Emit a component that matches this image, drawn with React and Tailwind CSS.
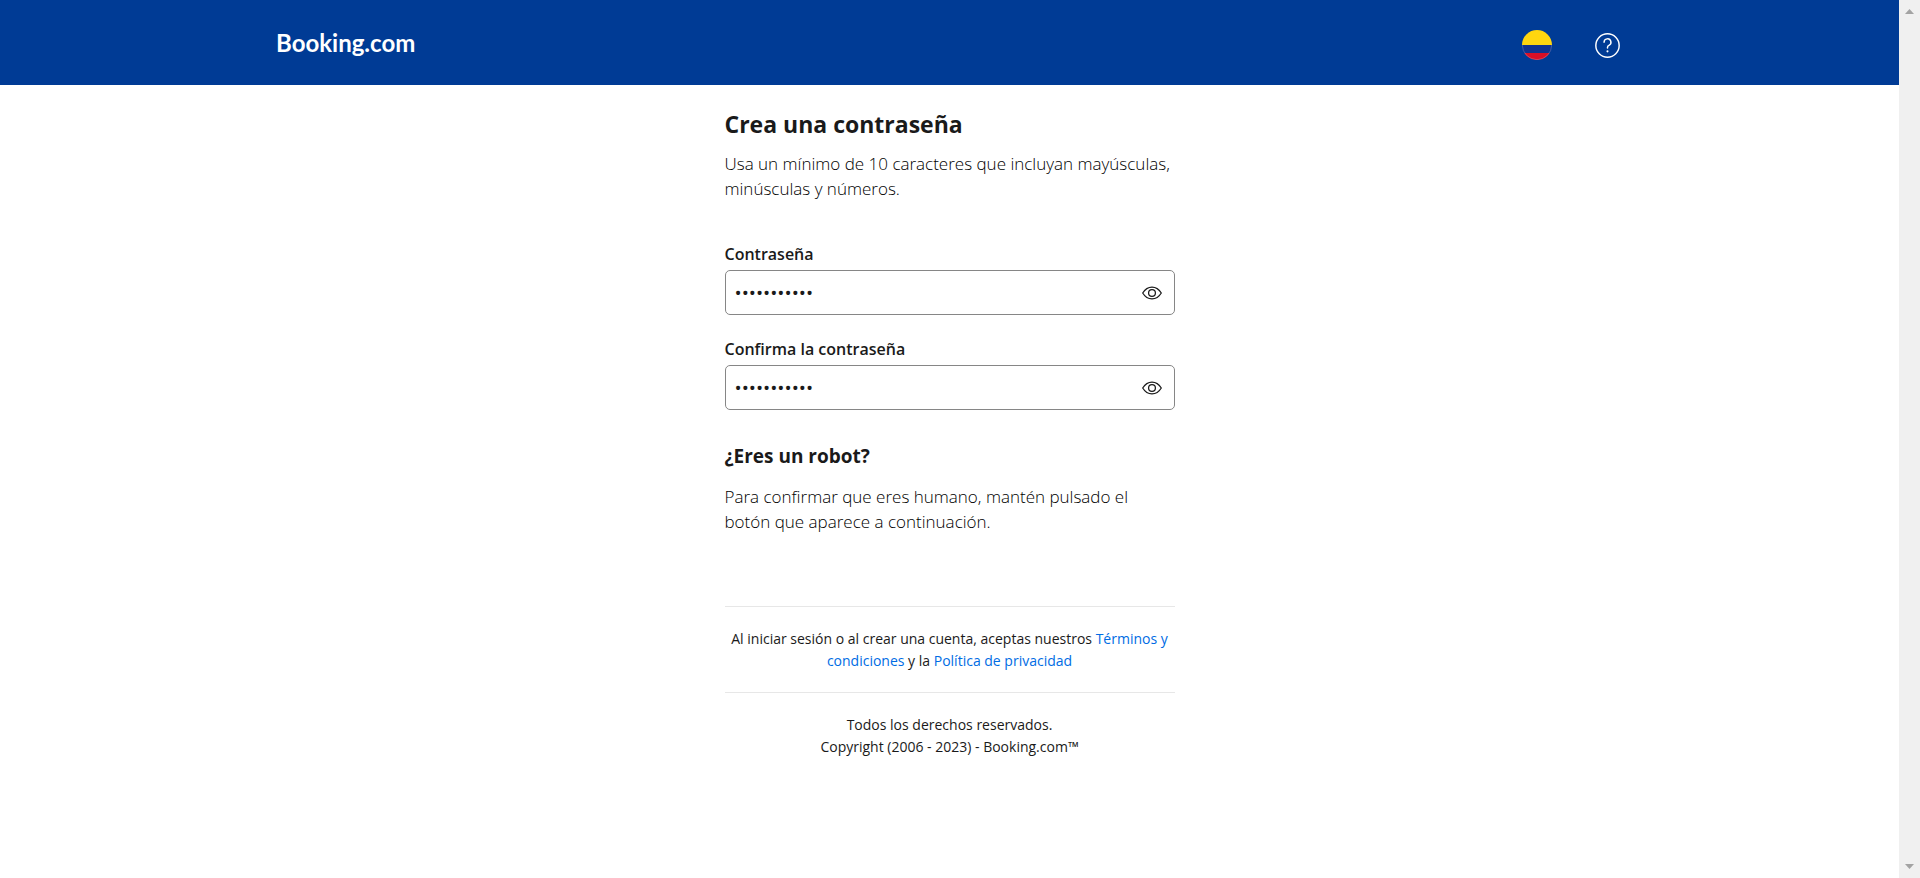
import { useState } from "react";

function EyeIcon() {
  return (
    <svg viewBox="0 0 20 14" className="h-[14px] w-5" fill="none" stroke="currentColor" strokeWidth="1.25" strokeLinejoin="round" aria-hidden="true">
      <path d="M0.7 7C3 3.2 6.2 1.1 10 1.1S17 3.2 19.3 7C17 10.8 13.8 12.9 10 12.9S3 10.8 0.7 7Z" />
      <circle cx="10" cy="7" r="3.4" />
    </svg>
  );
}

function PasswordField({ id, label }) {
  const [visible, setVisible] = useState(false);
  return (
    <div className="flex flex-col gap-[3px]">
      <label htmlFor={id} className="text-[16px] leading-[25px] font-semibold">
        {label}
      </label>
      <div className="flex h-[45px] items-center rounded-[5px] border border-[#868686] pr-3">
        <input
          id={id}
          type={visible ? "text" : "password"}
          defaultValue="Reserva2023"
          className="min-w-0 flex-1 bg-transparent pt-0.5 pl-[9px] text-[19px] outline-none"
        />
        <button type="button" aria-label="Mostrar contraseña" onClick={() => setVisible(!visible)}>
          <EyeIcon />
        </button>
      </div>
    </div>
  );
}

function FlagIcon() {
  return (
    <svg viewBox="0 0 30 30" className="size-[30px]" aria-hidden="true">
      <defs>
        <clipPath id="flag-round">
          <circle cx="15" cy="15" r="15" />
        </clipPath>
      </defs>
      <g clipPath="url(#flag-round)">
        <rect width="30" height="15" fill="#FFD60F" />
        <rect y="15" width="30" height="8" fill="#10338F" />
        <rect y="23" width="30" height="7" fill="#D80F27" />
      </g>
      <path d="M0.3 15A14.7 14.7 0 0 0 29.7 15" fill="none" stroke="#fff" strokeOpacity="0.35" strokeWidth="0.6" />
    </svg>
  );
}

function HelpIcon() {
  return (
    <svg viewBox="0 0 24 24" className="size-[25px]" fill="none" stroke="currentColor" strokeWidth="1.4" strokeLinecap="round" strokeLinejoin="round" aria-hidden="true">
      <circle cx="12" cy="12" r="11.2" />
      <path d="M8.7 8.9a3.3 3.3 0 1 1 4.7 3c-.9.4-1.4 1.1-1.4 2v.5" />
      <circle cx="12" cy="17.6" r="1" fill="currentColor" stroke="none" />
    </svg>
  );
}

function Header() {
  return (
    <header className="bg-[#003b95] text-white">
      <div className="mx-auto flex h-[85px] max-w-[1375px] items-center justify-between pr-[17px] pl-[14px]">
        <a href="#inicio" className="font-['Lato',sans-serif] text-[24px] leading-[30px] font-bold">
          Booking.com
        </a>
        <nav className="flex items-center gap-[43px] pt-[6px]">
          <button type="button" aria-label="Idioma" className="pb-0.5">
            <FlagIcon />
          </button>
          <a href="#ayuda" aria-label="Ayuda">
            <HelpIcon />
          </a>
        </nav>
      </div>
    </header>
  );
}

function Scrollbar() {
  return (
    <div className="flex w-[21px] shrink-0 flex-col items-center justify-between bg-[#f0f0f0] py-[9px] text-[#a3a3a3]" aria-hidden="true">
      <svg viewBox="0 0 9 5" className="h-[5px] w-[9px]" fill="currentColor">
        <path d="M4.5 0L9 5H0Z" />
      </svg>
      <svg viewBox="0 0 9 5" className="h-[5px] w-[9px]" fill="currentColor">
        <path d="M4.5 5L9 0H0Z" />
      </svg>
    </div>
  );
}

export default function App() {
  return (
    <div className="flex min-h-screen bg-white font-['Open_Sans','Noto_Sans',sans-serif] text-[#1a1a1a]">
      <div className="min-w-0 flex-1">
        <Header />
        <main className="mx-auto w-full max-w-[450px] pt-[22px]">
          <h1 className="text-[23px] leading-[35px] font-bold">Crea una contraseña</h1>
          <p className="mt-[9px] text-[17px] leading-[25px] font-light text-black">
            Usa un mínimo de 10 caracteres que incluyan mayúsculas, minúsculas y números.
          </p>
          <form className="mt-[41px] flex flex-col gap-[22px]">
            <PasswordField id="password" label="Contraseña" />
            <PasswordField id="confirm" label="Confirma la contraseña" />
          </form>
          <h2 className="mt-[31px] text-[19px] leading-[30px] font-bold">¿Eres un robot?</h2>
          <p className="mt-[13px] text-[17px] leading-[25px] font-light text-black">
            Para confirmar que eres humano, mantén pulsado el botón que aparece a continuación.
          </p>
          <footer className="mt-[72px] text-center text-[14px] leading-[22px]">
            <p className="border-t border-[#e7e7e7] pt-[21px] pb-5">
              Al iniciar sesión o al crear una cuenta, aceptas nuestros{" "}
              <a href="#terminos" className="text-[#006ce4]">Términos y condiciones</a> y la{" "}
              <a href="#privacidad" className="text-[#006ce4]">Política de privacidad</a>
            </p>
            <p className="border-t border-[#e7e7e7] pt-[21px] pb-5">
              Todos los derechos reservados.
              <br />
              Copyright (2006 - 2023) - Booking.com™
            </p>
          </footer>
        </main>
      </div>
      <Scrollbar />
    </div>
  );
}
